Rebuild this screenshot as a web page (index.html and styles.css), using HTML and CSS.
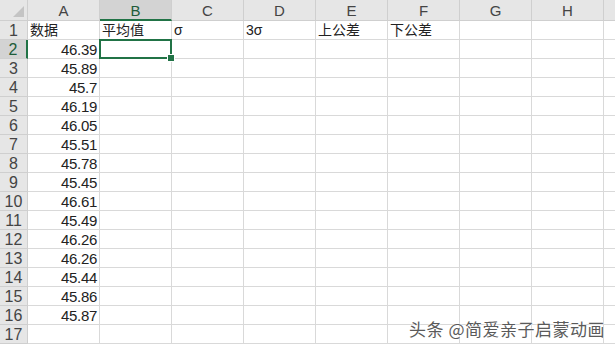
FILE: index.html
```html
<!DOCTYPE html>
<html lang="zh-CN">
<head>
    <meta charset="UTF-8">
    <title>数据表</title>
    <link rel="stylesheet" href="styles.css">
</head>
<body>
    <div class="sheet">
        <!-- 列标题 -->
        <div class="corner"><span class="tri"></span></div>
        <div class="col-head">A</div>
        <div class="col-head active">B</div>
        <div class="col-head">C</div>
        <div class="col-head">D</div>
        <div class="col-head">E</div>
        <div class="col-head">F</div>
        <div class="col-head">G</div>
        <div class="col-head">H</div>
        <div class="col-head"></div>
    </div>

    <div class="watermark">头条 @简爱亲子启蒙动画</div>

    <script>
        var dados = ["46.39", "45.89", "45.7", "46.19", "46.05", "45.51", "45.78", "45.45",
                     "46.61", "45.49", "46.26", "46.26", "45.44", "45.86", "45.87", ""];
        var titulos = ["数据", "平均值", "σ", "3σ", "上公差", "下公差", "", "", ""];
        var sheet = document.querySelector(".sheet");

        function celula(cls, texto) {
            var d = document.createElement("div");
            d.className = cls;
            d.textContent = texto;
            sheet.appendChild(d);
            return d;
        }

        // linha 1: títulos
        celula("row-head", "1");
        titulos.forEach(function (t) { celula("cell", t); });

        // linhas 2 a 17
        dados.forEach(function (v, i) {
            celula(i === 0 ? "row-head active" : "row-head", String(i + 2));
            celula("cell num", v);
            celula(i === 0 ? "cell selected" : "cell", "");
            for (var c = 0; c < 7; c++) celula("cell", "");
        });
    </script>
</body>
</html>
```

FILE: styles.css
```css
* {
    margin: 0;
    padding: 0;
    box-sizing: border-box;
}

body {
    width: 615px;
    height: 349px;
    overflow: hidden;
    background: #fff;
    font-family: "Liberation Sans", "Noto Sans CJK SC", sans-serif;
    color: #222;
    position: relative;
}

/* Grade da planilha */
.sheet {
    display: grid;
    grid-template-columns: 28px repeat(8, 72px) 20px;
    grid-template-rows: 21px repeat(17, 19px);
}

.corner {
    background: #e6e6e6;
    border-right: 1px solid #cfcfcf;
    border-bottom: 1px solid #cfcfcf;
    position: relative;
}

.corner .tri {
    position: absolute;
    right: 3px;
    bottom: 3px;
    width: 0;
    height: 0;
    border-left: 11px solid transparent;
    border-bottom: 11px solid #c4c4c4;
}

.col-head {
    background: #e6e6e6;
    border-right: 1px solid #cfcfcf;
    border-bottom: 1px solid #cfcfcf;
    text-align: center;
    font-size: 15px;
    line-height: 21px;
    color: #444;
}

.col-head.active {
    background: #d3d3d3;
    border-bottom: 2px solid #217346;
    color: #1e5c3a;
}

.row-head {
    background: #e6e6e6;
    border-right: 1px solid #cfcfcf;
    border-bottom: 1px solid #cfcfcf;
    text-align: center;
    font-size: 16px;
    line-height: 19px;
    color: #444;
}

.row-head.active {
    background: #d3d3d3;
    border-right: 2px solid #217346;
    color: #1e5c3a;
}

.cell {
    border-right: 1px solid #d9d9d9;
    border-bottom: 1px solid #d9d9d9;
    font-size: 14px;
    line-height: 19px;
    padding: 0 2px;
    white-space: nowrap;
    overflow: visible;
}

.cell.num {
    text-align: right;
    font-size: 15px;
    letter-spacing: -0.3px;
}

/* Célula selecionada B2 */
.cell.selected {
    position: relative;
}

.cell.selected::before {
    content: "";
    position: absolute;
    left: -1px;
    top: -1px;
    right: -1px;
    bottom: -1px;
    border: 2px solid #217346;
}

.cell.selected::after {
    content: "";
    position: absolute;
    right: -4px;
    bottom: -4px;
    width: 6px;
    height: 6px;
    background: #217346;
    border: 1px solid #fff;
}

/* Marca d'água */
.watermark {
    position: absolute;
    right: 10px;
    bottom: 8px;
    font-family: "Noto Sans CJK SC", sans-serif;
    font-size: 17px;
    color: #5a5a5a;
    letter-spacing: 0.5px;
    text-shadow: 0 0 2px #fff, 0 0 2px #fff;
}
```
